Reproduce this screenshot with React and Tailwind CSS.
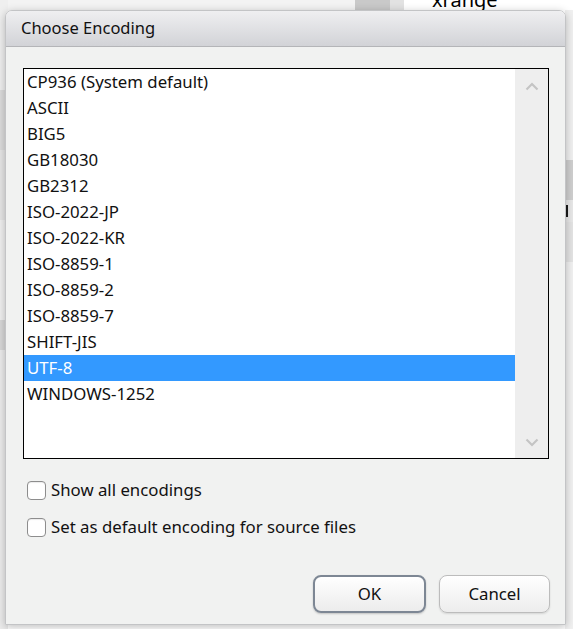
import React from 'react';

const encodings = [
  'CP936 (System default)',
  'ASCII',
  'BIG5',
  'GB18030',
  'GB2312',
  'ISO-2022-JP',
  'ISO-2022-KR',
  'ISO-8859-1',
  'ISO-8859-2',
  'ISO-8859-7',
  'SHIFT-JIS',
  'UTF-8',
  'WINDOWS-1252',
];

const Chevron = ({ up }) => (
  <svg width="14" height="9" viewBox="0 0 14 9" className="mx-auto">
    <path
      d={up ? 'M1.5 7.5 L7 2 L12.5 7.5' : 'M1.5 1.5 L7 7 L12.5 1.5'}
      fill="none"
      stroke="#c4c4c4"
      strokeWidth="2.2"
    />
  </svg>
);

const Checkbox = ({ label }) => (
  <label className="flex items-center gap-[5px] h-[20px]">
    <span className="w-[19px] h-[19px] rounded-[4px] border border-[#8d8d8d] bg-white shadow-[inset_0_1px_1px_rgba(0,0,0,0.08)]" />
    <span className="text-[16.8px] text-[#111] leading-none">{label}</span>
  </label>
);

export default function App() {
  const selected = 'UTF-8';

  return (
    <div className="relative w-[573px] h-[629px] overflow-hidden bg-[#f3f3f3] font-['Noto_Sans','Open_Sans',sans-serif]">
      {/* app behind the dialog */}
      <div className="flex h-full">
        <div className="w-[8px] flex flex-col">
          <div className="h-[90px] bg-[#efefef]" />
          <div className="h-[60px] bg-[#dcdcdc]" />
          <div className="h-[70px] bg-[#e6e6e6]" />
          <div className="h-[100px] bg-[#f0f0f0]" />
          <div className="h-[30px] bg-[#d8d8d8]" />
          <div className="flex-1 bg-[#ececec]" />
        </div>
        <div className="flex-1 flex flex-col">
          <div className="h-[12px] flex">
            <div className="w-[347px]" />
            <div className="w-[35px] bg-[#c9c9c9]" />
            <div className="w-[14px] bg-[#e2e2e2]" />
            <div className="flex-1 bg-white text-[20px] leading-[12px] pl-[28px] overflow-hidden text-black">
              <span className="relative top-[-6px]">xrange</span>
            </div>
          </div>
          <div className="flex-1 bg-white" />
        </div>
        <div className="w-[8px] flex flex-col">
          <div className="h-[10px] bg-white" />
          <div className="h-[150px] bg-[#f0f0f0]" />
          <div className="h-[40px] bg-[#cfcfcf]" />
          <div className="h-[22px] bg-[#e8e8e8] flex items-center">
            <div className="w-[3px] h-[12px] bg-[#1a1a1a]" />
          </div>
          <div className="h-[40px] bg-[#e4e4e4]" />
          <div className="flex-1 bg-[#f1f1f1]" />
        </div>
      </div>

      {/* dialog window */}
      <div className="absolute left-[5px] top-[10px] w-[561px] h-[615px] flex flex-col rounded-t-[7px] border border-[#c3c4c6] shadow-[0_2px_8px_rgba(0,0,0,0.25)] overflow-hidden">
        <div className="h-[36px] shrink-0 flex items-center pl-[15px] bg-gradient-to-b from-[#efeff1] to-[#d2d3d7] border-b border-[#b4b5b8] text-[16.5px] text-[#111]">
          Choose Encoding
        </div>

        <div className="flex-1 flex flex-col bg-[#f1f2f1] pl-[17px] pr-[15px] pt-[21px] pb-[11px]">
          <div className="w-[526px] h-[391px] border border-black bg-white flex">
            <ul className="flex-1 flex flex-col">
              {encodings.map((e) => (
                <li
                  key={e}
                  className={`h-[26px] flex items-center pl-[3px] text-[16.8px] ${
                    e === selected ? 'bg-[#3399ff] text-white' : 'text-[#111]'
                  }`}
                >
                  {e}
                </li>
              ))}
            </ul>
            <div className="w-[33px] bg-[#eeeeee] flex flex-col justify-between pt-[13px] pb-[11px]">
              <Chevron up />
              <Chevron />
            </div>
          </div>

          <div className="flex flex-col gap-[17px] mt-[21px] pl-[4px]">
            <Checkbox label="Show all encodings" />
            <Checkbox label="Set as default encoding for source files" />
          </div>

          <div className="mt-auto flex justify-end gap-[13px]">
            <button className="w-[113px] h-[38px] rounded-[8px] border-2 border-[#7d8794] bg-gradient-to-b from-white to-[#ececec] shadow-[0_1px_2px_rgba(0,0,0,0.2)] text-[16.8px] text-[#111]">
              OK
            </button>
            <button className="w-[111px] h-[38px] rounded-[8px] border border-[#bcbcbc] bg-gradient-to-b from-white to-[#ededed] shadow-[0_1px_2px_rgba(0,0,0,0.12)] text-[16.8px] text-[#111]">
              Cancel
            </button>
          </div>
        </div>
      </div>
    </div>
  );
}
